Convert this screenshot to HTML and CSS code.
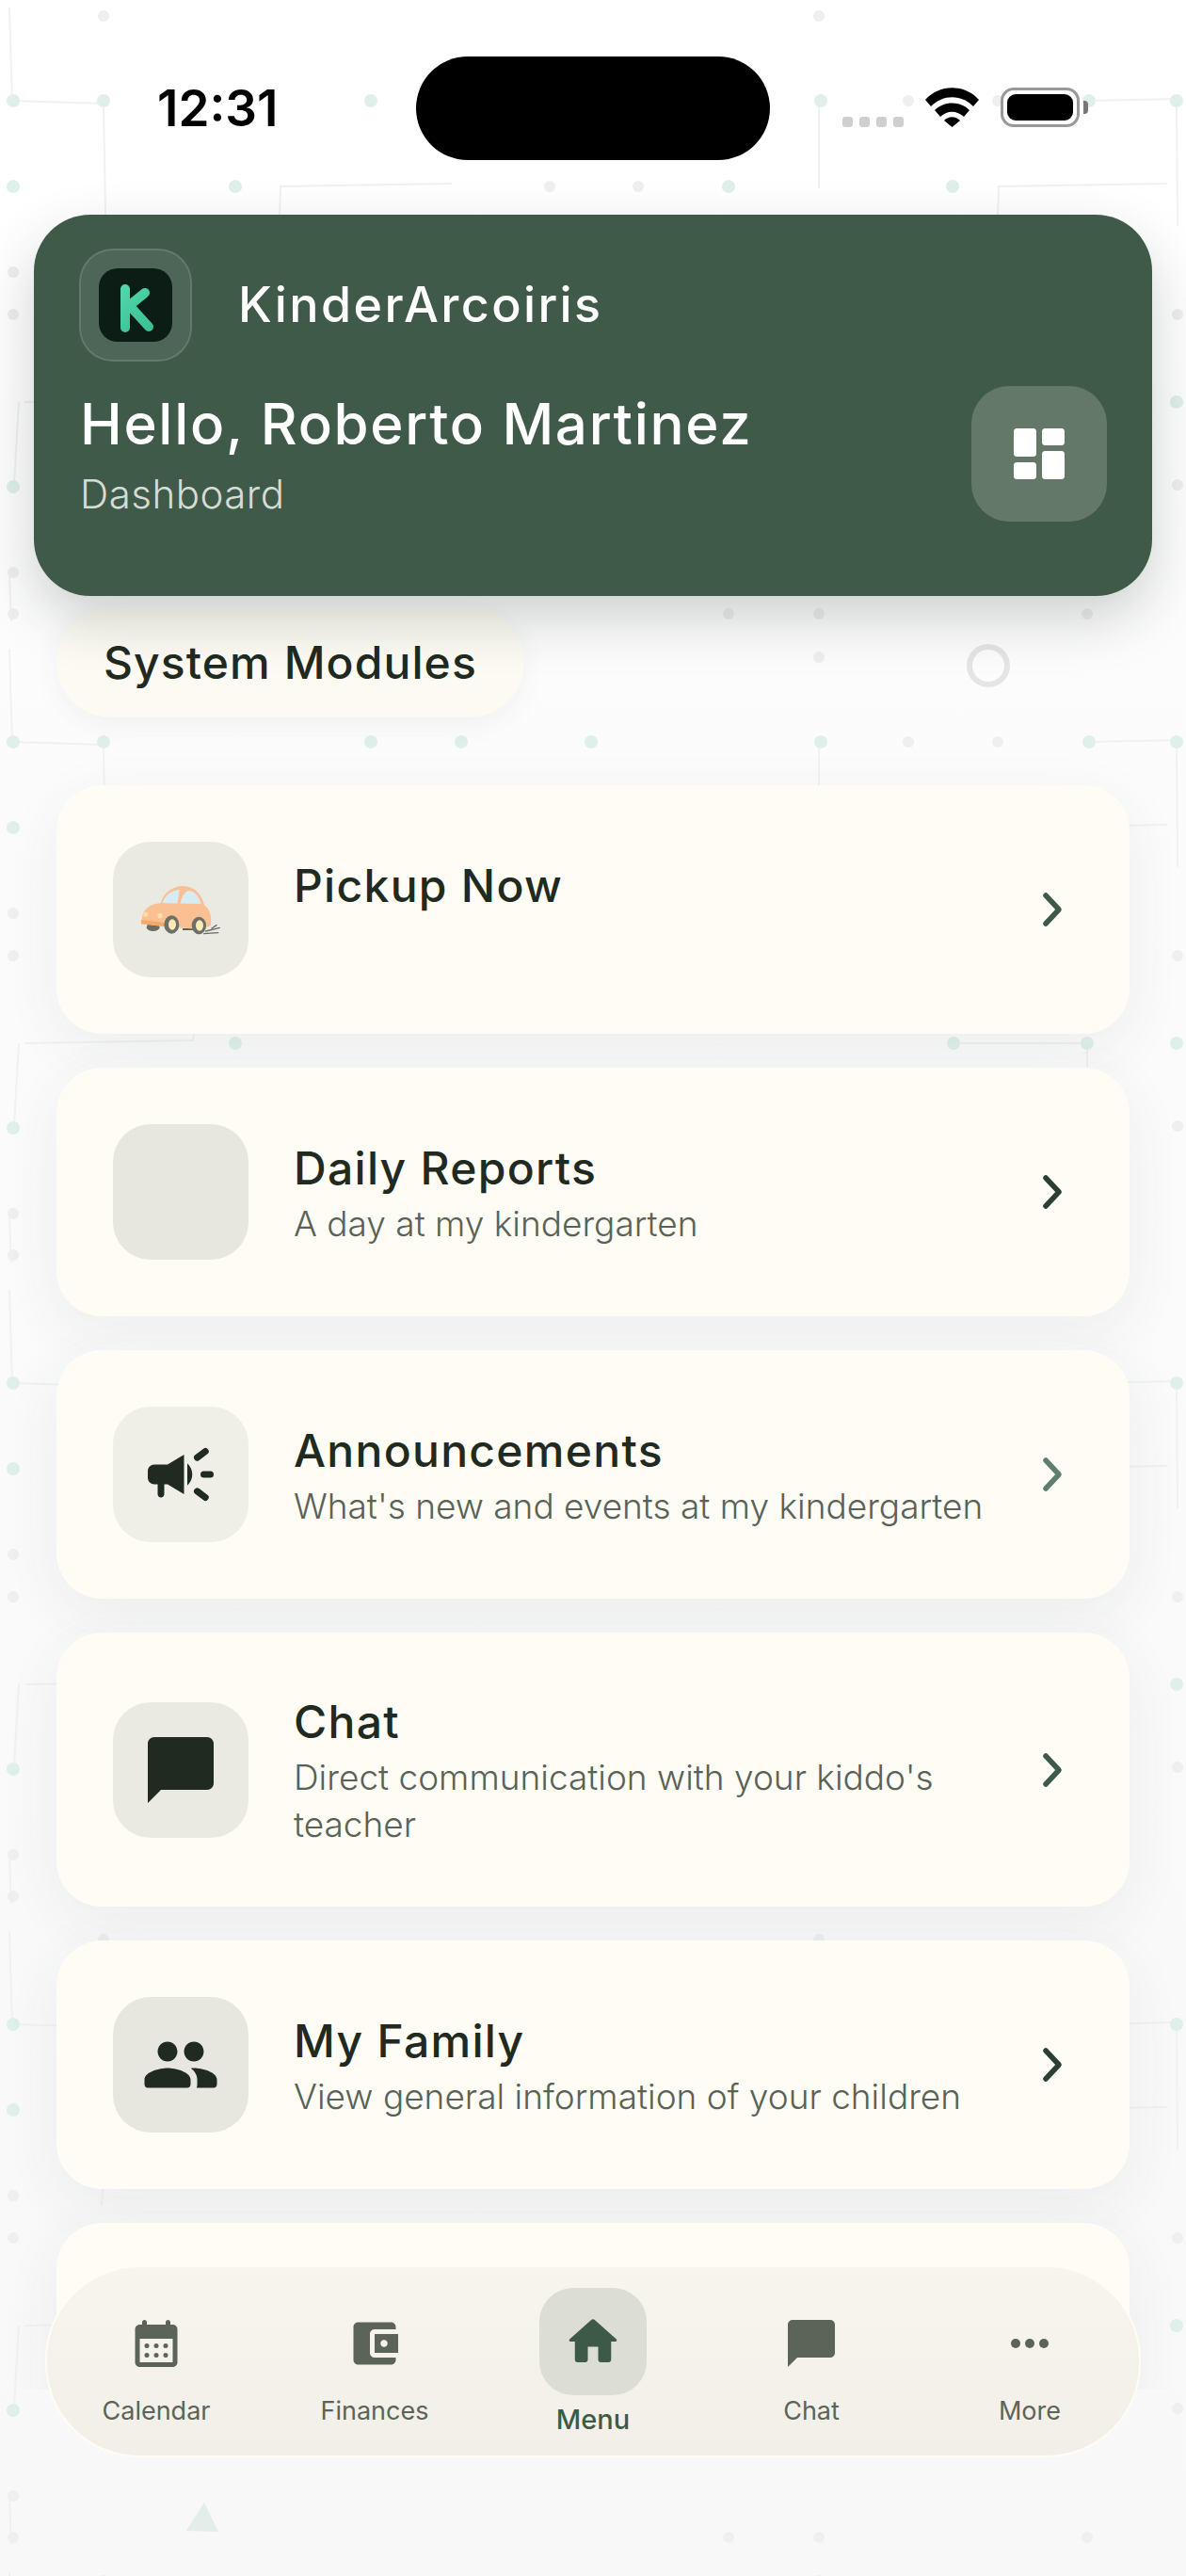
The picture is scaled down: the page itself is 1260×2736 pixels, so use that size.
FILE: index.html
```html
<!DOCTYPE html>
<html lang="en">
<head>
<meta charset="utf-8">
<title>KinderArcoiris</title>
<link rel="stylesheet" href="styles.css">
</head>
<body>
<svg class="bg" width="1260" height="2736" aria-hidden="true">
  <defs>
    <pattern id="tile" width="1260" height="681" patternUnits="userSpaceOnUse">
      <g class="bg-lines">
        <path d="M10 8 L13 107 L110 110 L112 228 L108 300"/>
        <path d="M1157 107 L1250 105 L1251 240"/>
        <path d="M297 230 L298 198 L480 195"/>
        <path d="M1060 230 L1061 198 L1240 195"/>
        <path d="M26 427 L205 424 L207 410"/>
        <path d="M20 427 L15 515"/>
        <path d="M1013 427 L1155 427 L1155 470"/>
        <path d="M870 107 L870 200"/>
        <path d="M10 610 L12 660"/>
      </g>
      <g class="bg-green">
        <circle cx="14" cy="107" r="7"/><circle cx="110" cy="107" r="7"/><circle cx="394" cy="107" r="7"/>
        <circle cx="490" cy="107" r="7"/><circle cx="628" cy="107" r="7"/>
        <circle cx="872" cy="107" r="7"/><circle cx="1157" cy="107" r="7"/><circle cx="1250" cy="107" r="7"/>
        <circle cx="14" cy="198" r="7"/><circle cx="250" cy="198" r="7"/><circle cx="774" cy="198" r="7"/>
        <circle cx="1012" cy="198" r="7"/><circle cx="250" cy="427" r="7"/><circle cx="1013" cy="427" r="7"/>
        <circle cx="1155" cy="427" r="7"/><circle cx="1250" cy="427" r="7"/><circle cx="14" cy="517" r="7"/>
      </g>
      <g class="bg-grey">
        <circle cx="110" cy="17" r="6"/><circle cx="870" cy="17" r="6"/><circle cx="14" cy="289" r="6"/>
        <circle cx="14" cy="334" r="6"/><circle cx="1251" cy="334" r="6"/><circle cx="14" cy="652" r="6"/>
        <circle cx="774" cy="652" r="6"/><circle cx="870" cy="652" r="6"/><circle cx="1155" cy="652" r="6"/>
        <circle cx="965" cy="107" r="6"/><circle cx="1060" cy="107" r="6"/>
        <circle cx="584" cy="198" r="6"/><circle cx="678" cy="198" r="6"/><circle cx="14" cy="608" r="6"/>
        <circle cx="1251" cy="515" r="6"/>
      </g>
    </pattern>
  </defs>
  <rect width="1260" height="2736" fill="url(#tile)"/>
  <polygon class="bg-tri" points="217,2658 232,2689 198,2688"/>
</svg>

<div class="app">
  <div class="status">
    <div class="time">12:31</div>
    <div class="island"></div>
    <div class="indicators">
      <div class="signal"><i></i><i></i><i></i><i></i></div>
      <svg class="wifi" width="57" height="42" viewBox="0 0 57 42"><path d="M0 13C15-4 42-4 57 13L51 20C38 7 19 7 6 20Z"/><path d="M10 24C20 14 37 14 47 24L41 31C33 24 24 24 16 31Z"/><path d="M20 35C25 30 32 30 37 35L28.500 42Z"/></svg>
      <div class="battery"><i></i></div>
      <div class="nub"></div>
    </div>
  </div>

  <header class="hero">
    <div class="brand">
      <div class="logo-frame">
        <div class="logo">
          <svg width="78" height="78" viewBox="0 0 78 78">
            <defs><linearGradient id="kgrad" gradientUnits="userSpaceOnUse" x1="20" y1="15" x2="55" y2="65"><stop offset="0" stop-color="#55d9af"/><stop offset="1" stop-color="#3bc094"/></linearGradient></defs>
            <path d="M28 22V63M28 43L49 26M33 40L53 62" fill="none" stroke="url(#kgrad)" stroke-width="10" stroke-linecap="round"/>
          </svg>
        </div>
      </div>
      <div class="brand-name">KinderArcoiris</div>
    </div>
    <div class="hero-row">
      <div class="hero-text">
        <h1 class="hello">Hello, Roberto Martinez</h1>
        <div class="hero-sub">Dashboard</div>
      </div>
      <div class="hero-btn">
        <svg width="72" height="72" viewBox="0 0 24 24" fill="#fff"><path d="M4 13h6c.55 0 1-.45 1-1V4c0-.55-.45-1-1-1H4c-.55 0-1 .45-1 1v8c0 .55.45 1 1 1zm0 8h6c.55 0 1-.45 1-1v-4c0-.55-.45-1-1-1H4c-.55 0-1 .45-1 1v4c0 .55.45 1 1 1zm10 0h6c.55 0 1-.45 1-1v-8c0-.55-.45-1-1-1h-6c-.55 0-1 .45-1 1v8c0 .55.45 1 1 1zM13 4v4c0 .55.45 1 1 1h6c.55 0 1-.45 1-1V4c0-.55-.45-1-1-1h-6c-.55 0-1 .45-1 1z"/></svg>
      </div>
    </div>
  </header>

  <main class="content">
    <div class="section-row">
      <div class="pill">System Modules</div>
      <div class="spinner"></div>
    </div>

    <div class="cards">
      <a class="card">
        <div class="icon-box tone-a">
          <svg width="84" height="84" viewBox="150 132 252 252">
            <ellipse cx="188" cy="314" rx="21" ry="13" fill="#6d6d68"/>
            <path d="M282 318H318V324H282Z" fill="#5f5f5a"/>
            <path d="M210 245C218 205 250 183 285 183C322 185 346 212 354 255Z" fill="#fabf94"/>
            <path d="M217 238C224 214 245 197 272 195L265 243Z" fill="#d6ecf3"/>
            <path d="M274 244C278 218 288 199 304 198C324 201 338 222 342 248Z" fill="#d6ecf3"/>
            <path d="M152 292C152 260 175 240 212 238L345 240C366 250 376 275 372 310L340 322L225 312L152 304Z" fill="#fbbf94"/>
            <path d="M150 291L228 300V313L150 304Z" fill="#f5aa6b"/>
            <circle cx="165" cy="274" r="8" fill="#fddfa8"/>
            <circle cx="210" cy="278" r="8" fill="#fddfa8"/>
            <ellipse cx="247" cy="306" rx="24" ry="29" fill="#6f6f6a"/>
            <ellipse cx="249" cy="306" rx="12" ry="17" fill="#fdeab5"/>
            <ellipse cx="334" cy="309" rx="23" ry="28" fill="#6f6f6a"/>
            <ellipse cx="336" cy="309" rx="12" ry="17" fill="#fdeab5"/>
            <path d="M350 335L395 332M356 327L400 316M375 318L390 308" stroke="#6a6a66" stroke-width="4" stroke-linecap="round" fill="none"/>
          </svg>
        </div>
        <div class="card-text">
          <div class="card-title">Pickup Now</div>
          <div class="card-sub"></div>
        </div>
        <svg class="chev" width="44" height="48" viewBox="0 0 44 48"><path d="M15 9L29 24L15 39"/></svg>
      </a>

      <a class="card">
        <div class="icon-box tone-b"></div>
        <div class="card-text">
          <div class="card-title">Daily Reports</div>
          <div class="card-sub">A day at my kindergarten</div>
        </div>
        <svg class="chev chev-dark" width="44" height="48" viewBox="0 0 44 48"><path d="M15 9L29 24L15 39"/></svg>
      </a>

      <a class="card">
        <div class="icon-box tone-c">
          <svg width="84" height="84" viewBox="0 0 24 24"><path class="ink" d="M4 9c-1.100 0-2 .9-2 2v2c0 1.100.9 2 2 2h1v3c0 .55.45 1 1 1s1-.45 1-1v-3h1l5 3V6L8 9H4zm11.500 3c0-1.330-.58-2.530-1.500-3.350v6.690c.92-.81 1.500-2.010 1.500-3.340z"/><path class="ink-line" d="M19 12H21M17 6.900L19.500 5M17 17.100L19.500 19"/></svg>
        </div>
        <div class="card-text">
          <div class="card-title">Announcements</div>
          <div class="card-sub">What's new and events at my kindergarten</div>
        </div>
        <svg class="chev chev-soft" width="44" height="48" viewBox="0 0 44 48"><path d="M15 9L29 24L15 39"/></svg>
      </a>

      <a class="card">
        <div class="icon-box tone-a">
          <svg width="84" height="84" viewBox="0 0 24 24"><path class="ink" d="M20 2H4c-1.100 0-2 .9-2 2v18l4-4h14c1.100 0 2-.9 2-2V4c0-1.100-.9-2-2-2z"/></svg>
        </div>
        <div class="card-text">
          <div class="card-title">Chat</div>
          <div class="card-sub">Direct communication with your kiddo's teacher</div>
        </div>
        <svg class="chev" width="44" height="48" viewBox="0 0 44 48"><path d="M15 9L29 24L15 39"/></svg>
      </a>

      <a class="card">
        <div class="icon-box tone-b">
          <svg width="84" height="84" viewBox="0 0 24 24"><path class="ink" d="M16 11c1.660 0 2.990-1.340 2.990-3S17.660 5 16 5s-3 1.340-3 3 1.340 3 3 3zm-8 0c1.660 0 2.990-1.340 2.990-3S9.660 5 8 5 5 6.340 5 8s1.340 3 3 3zm0 2c-2.330 0-7 1.170-7 3.500V18c0 .55.45 1 1 1h12c.55 0 1-.45 1-1v-1.500c0-2.330-4.670-3.500-7-3.500zm8 0c-.29 0-.62.02-.97.05.02.01.03.03.04.04 1.140.83 1.930 1.940 1.930 3.410V18c0 .35-.07.69-.18 1H22c.55 0 1-.45 1-1v-1.500c0-2.330-4.670-3.500-7-3.500z"/></svg>
        </div>
        <div class="card-text">
          <div class="card-title">My Family</div>
          <div class="card-sub">View general information of your children</div>
        </div>
        <svg class="chev chev-dark" width="44" height="48" viewBox="0 0 44 48"><path d="M15 9L29 24L15 39"/></svg>
      </a>

      <a class="card"></a>
    </div>
  </main>
</div>

<nav class="tabbar">
  <div class="tab">
    <svg width="60" height="60" viewBox="0 0 24 24"><path fill-rule="evenodd" d="M19 4h-1V3c0-.55-.45-1-1-1s-1 .45-1 1v1H8V3c0-.55-.45-1-1-1s-1 .45-1 1v1H5c-1.100 0-2 .9-2 2v14c0 1.100.9 2 2 2h14c1.100 0 2-.9 2-2V6c0-1.100-.9-2-2-2zM19 20H5V10h14v10z"/><circle cx="8" cy="13" r="1"/><circle cx="12" cy="13" r="1"/><circle cx="16" cy="13" r="1"/><circle cx="8" cy="17" r="1"/><circle cx="12" cy="17" r="1"/><circle cx="16" cy="17" r="1"/></svg>
    <span class="tab-label">Calendar</span>
  </div>
  <div class="tab">
    <svg width="60" height="60" viewBox="0 0 24 24"><path d="M21 18v1c0 1.100-.9 2-2 2H5c-1.110 0-2-.9-2-2V5c0-1.100.89-2 2-2h14c1.100 0 2 .9 2 2v1h-9c-1.110 0-2 .9-2 2v8c0 1.100.89 2 2 2h9zm-9-2h10V8H12v8zm4-2.500c-.83 0-1.500-.67-1.500-1.500s.67-1.500 1.500-1.500 1.500.67 1.500 1.500-.67 1.500-1.500 1.500z"/></svg>
    <span class="tab-label">Finances</span>
  </div>
  <div class="tab tab-active">
    <div class="tab-bubble">
      <svg width="66" height="66" viewBox="0 0 24 24"><path d="M10 19v-5h4v5c0 .55.45 1 1 1h3c.55 0 1-.45 1-1v-7h1.700c.46 0 .68-.57.33-.87L12.670 3.600c-.38-.34-.96-.34-1.340 0l-8.360 7.530c-.34.3-.13.87.33.87H5v7c0 .55.45 1 1 1h3c.55 0 1-.45 1-1z"/></svg>
    </div>
    <span class="tab-label">Menu</span>
  </div>
  <div class="tab">
    <svg width="60" height="60" viewBox="0 0 24 24"><path d="M20 2H4c-1.100 0-2 .9-2 2v18l4-4h14c1.100 0 2-.9 2-2V4c0-1.100-.9-2-2-2z"/></svg>
    <span class="tab-label">Chat</span>
  </div>
  <div class="tab">
    <svg width="60" height="60" viewBox="0 0 24 24"><circle cx="6" cy="12" r="2"/><circle cx="12" cy="12" r="2"/><circle cx="18" cy="12" r="2"/></svg>
    <span class="tab-label">More</span>
  </div>
</nav>
</body>
</html>
```

FILE: styles.css
```css
* { box-sizing: border-box; }
html, body { margin: 0; padding: 0; }
body {
  position: relative;
  width: 1260px;
  height: 2736px;
  overflow: hidden;
  font-family: Inter, "Noto Sans", sans-serif;
  background: linear-gradient(180deg, #ffffff 0, #ffffff 200px, #fbfbfb 900px, #f8f8f8 100%);
}
.bg { position: absolute; left: 0; top: 0; z-index: 0; }
.bg-lines path { fill: none; stroke: #eff2f0; stroke-width: 2; }
.bg-green circle { fill: #dff0e9; }
.bg-grey circle { fill: #eeefef; }
.bg-tri { fill: #e3eeea; }

.app { position: relative; z-index: 1; }

/* status bar */
.status { display: flex; height: 228px; padding: 60px 0 0 167px; align-items: flex-start; }
.time { width: 275px; font-size: 53px; line-height: 110px; font-weight: 600; color: #000; }
.island { width: 376px; height: 110px; border-radius: 55px; background: #000; }
.indicators { display: flex; align-items: center; height: 42px; margin: 33px 0 0 77px; }
.signal { display: flex; gap: 7px; margin: 31px 23px 0 0; }
.signal i { display: block; width: 11px; height: 11px; border-radius: 3px; background: #cfcfcf; }
.wifi { fill: #000; margin-right: 23px; }
.battery { width: 84px; height: 42px; padding: 4px; border: 3px solid #999; border-radius: 14px; }
.battery i { display: block; width: 100%; height: 100%; border-radius: 9px; background: #000; }
.nub { width: 5px; height: 14px; margin-left: 4px; border-radius: 0 4px 4px 0; background: #777; }

/* hero */
.hero {
  position: relative;
  z-index: 2;
  margin: 0 36px;
  height: 405px;
  padding: 36px 48px 0;
  border-radius: 60px;
  background: #3f5a49;
  box-shadow: 0 24px 60px rgba(20, 35, 30, .2);
  color: #fff;
}
.brand { display: flex; align-items: center; gap: 49px; }
.logo-frame {
  display: flex; align-items: center; justify-content: center;
  width: 120px; height: 120px;
  border-radius: 36px;
  border: 2px solid rgba(255, 255, 255, .12);
  background: rgba(255, 255, 255, .08);
}
.logo { width: 78px; height: 78px; border-radius: 20px; background: #0b1d15; }
.logo svg { display: block; }
.brand-name { font-size: 52px; line-height: 64px; font-weight: 500; letter-spacing: 2.4px; }
.hero-row { display: flex; align-items: center; justify-content: space-between; margin-top: 26px; }
.hero-text { padding-left: 1px; }
.hello { margin: 0 0 14px; font-size: 60px; line-height: 72px; font-weight: 500; letter-spacing: 1.7px; }
.hero-sub { font-size: 42px; line-height: 50px; font-weight: 300; color: #d5dcd6; letter-spacing: .5px; }
.hero-btn {
  display: flex; align-items: center; justify-content: center;
  width: 144px; height: 144px;
  border-radius: 40px;
  background: #64786a;
}

/* main */
.content { height: 1905px; padding: 12px 60px 0; overflow: hidden; }
.section-row { display: flex; align-items: center; justify-content: space-between; margin-bottom: 72px; }
.pill {
  height: 117px;
  padding: 0 50px;
  border-radius: 58px;
  background: #fcfaf2;
  font-size: 48px;
  line-height: 117px;
  font-weight: 500;
  letter-spacing: 1.1px;
  color: #212a21;
  box-shadow: 0 8px 30px rgba(50, 70, 80, .06);
}
.spinner {
  width: 46px; height: 46px;
  margin: 6px 127px 0 0;
  border: 6px solid #e4e5e4;
  border-radius: 50%;
}
.cards { display: flex; flex-direction: column; gap: 36px; }
.card {
  display: flex;
  align-items: center;
  min-height: 264px;
  padding: 60px;
  border-radius: 48px;
  background: #fefcf4;
  box-shadow: 0 16px 60px rgba(50, 70, 90, .07);
}
.icon-box {
  flex: none;
  display: flex; align-items: center; justify-content: center;
  width: 144px; height: 144px;
  border-radius: 40px;
}
.tone-a { background: #eaeae3; }
.tone-b { background: #e7e7e0; }
.tone-c { background: #efefe8; }
.ink { fill: #212a21; }
.ink-line { fill: none; stroke: #212a21; stroke-width: 2; stroke-linecap: round; }
.card-text { flex: 1; min-width: 0; margin: 0 36px 0 48px; padding-bottom: 2px; }
.card-title { font-size: 48px; line-height: 69px; font-weight: 500; letter-spacing: 1.3px; color: #212a21; }
.card-sub { min-height: 50px; font-size: 37px; line-height: 50px; font-weight: 300; color: #596257; }
.chev { flex: none; }
.chev path { fill: none; stroke: #3d5a47; stroke-width: 5.500; stroke-linecap: round; stroke-linejoin: round; }
.chev-dark path { stroke: #2c3f33; }
.chev-soft path { stroke: #5f7f6e; }

/* tab bar */
.tabbar {
  position: absolute;
  z-index: 3;
  left: 48px;
  top: 2406px;
  display: flex;
  width: 1164px;
  height: 204px;
  border: 2px solid #fffcf3;
  border-radius: 100px;
  background: linear-gradient(180deg, #f7f5ee 0, #f2efe8 100%);
}
.tab { flex: 1; display: flex; flex-direction: column; align-items: center; padding-top: 51px; color: #5c6457; }
.tab svg { display: block; fill: currentColor; }
.tab-label { margin-top: 25px; font-size: 27px; line-height: 34px; color: #5c6457; }
.tab-active { padding-top: 22px; color: #3d5a47; }
.tab-bubble {
  display: flex; align-items: center; justify-content: center;
  width: 114px; height: 114px;
  border-radius: 36px;
  background: #dcddd5;
}
.tab-active .tab-label { margin-top: 9px; font-size: 29px; font-weight: 500; color: #3d5a47; }
```
